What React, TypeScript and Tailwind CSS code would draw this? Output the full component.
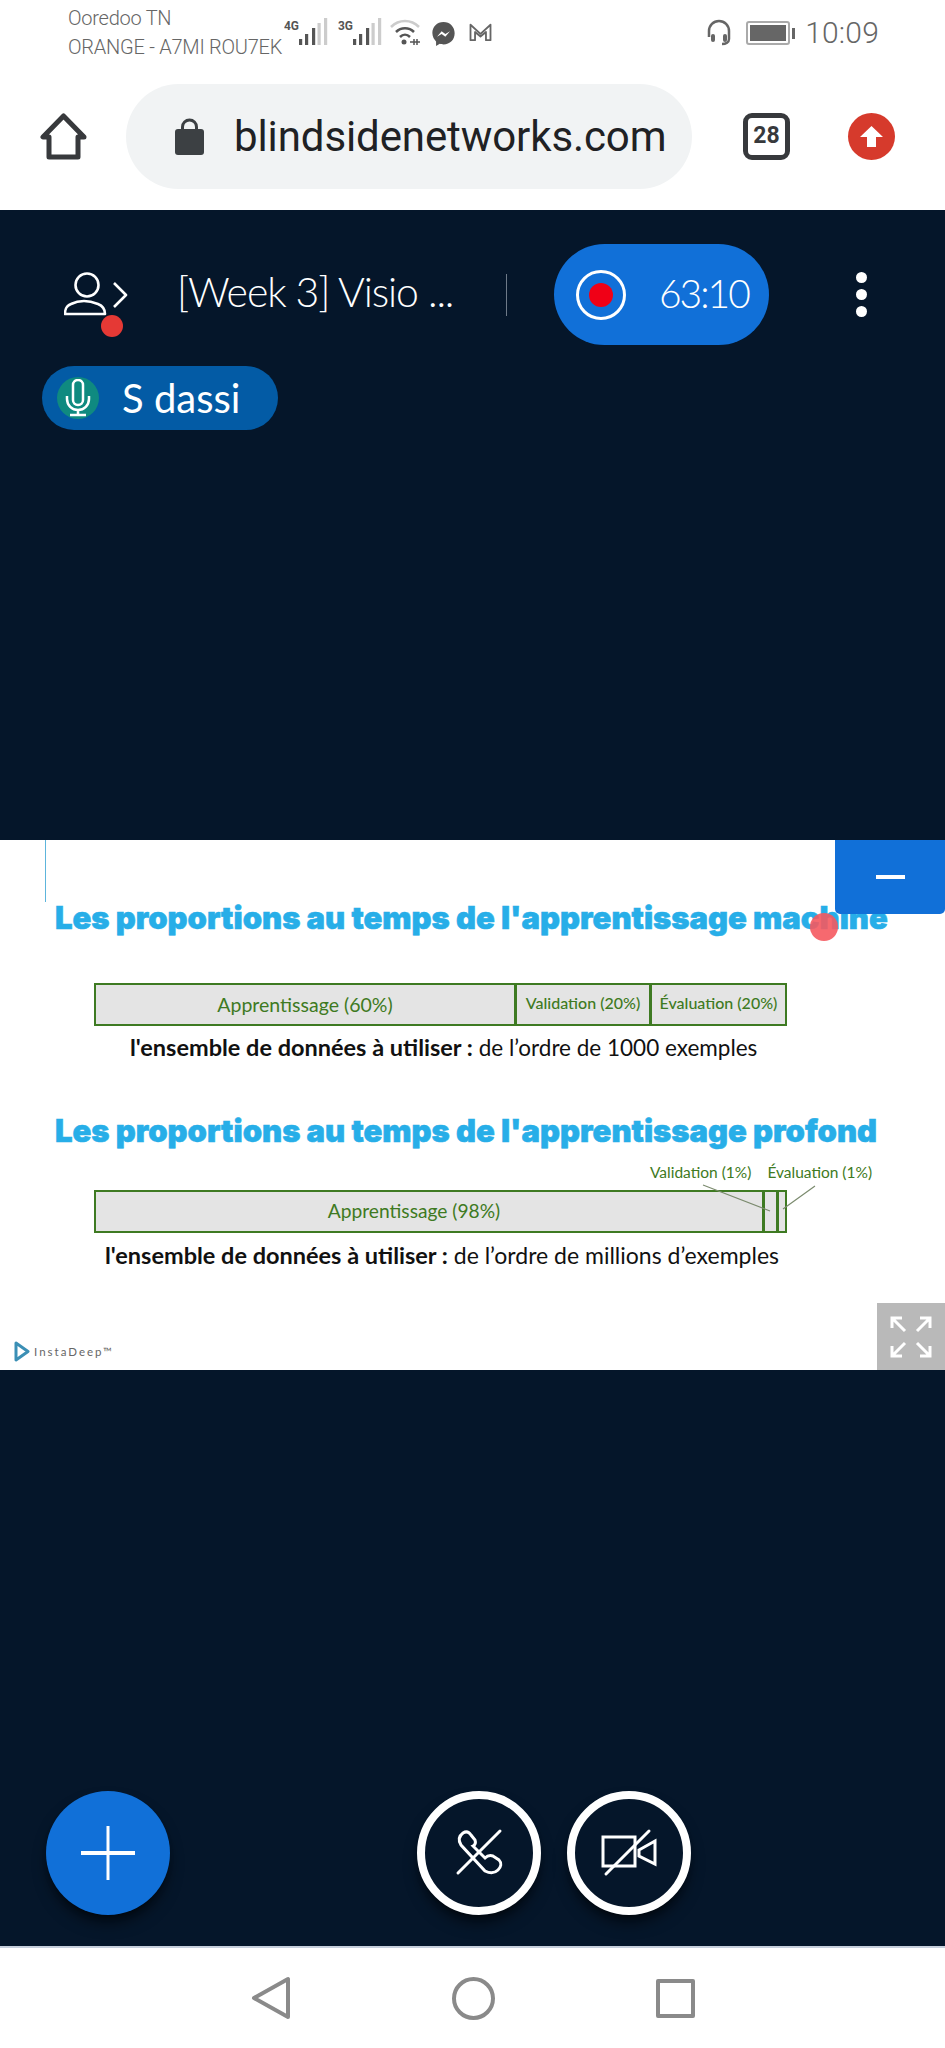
const sans = "font-['Lato','Liberation_Sans',sans-serif]";

function SignalIcon({ label }: { label: string }) {
  return (
    <svg width="44" height="28" viewBox="0 0 44 28">
      <text x="0" y="12" fontSize="13" fontWeight="700" fill="#555" fontFamily="Roboto, sans-serif" textLength="15" lengthAdjust="spacingAndGlyphs">{label}</text>
      <rect x="15" y="21" width="3.2" height="6" fill="#555" />
      <rect x="21" y="16" width="3.2" height="11" fill="#555" />
      <rect x="28" y="10" width="3.2" height="17" fill="#555" />
      <rect x="33.5" y="5" width="3.2" height="22" fill="#ccc" />
      <rect x="40" y="0" width="3.2" height="27" fill="#ccc" />
    </svg>
  );
}

function StatusBar() {
  return (
    <div className="h-[70px] flex items-start pl-[68px] pr-[66px] font-['Roboto',sans-serif] font-light text-[#666]">
      <div className="w-[216px] pt-[4px] text-[20px] leading-[29px] tracking-[-0.25px] whitespace-nowrap">
        <div>Ooredoo TN</div>
        <div>ORANGE - A7MI ROU7EK</div>
      </div>
      <div className="mt-[18px] flex items-start">
        <SignalIcon label="4G" />
        <div className="ml-[10px]"><SignalIcon label="3G" /></div>
        <svg width="32" height="26" viewBox="0 0 32 26" fill="none" className="ml-[7px] mt-[1px]">
          <path d="M2 8C10 0 22 0 30 8" stroke="#ccc" strokeWidth="2.5" />
          <path d="M7 13c5-5 13-5 18 0" stroke="#555" strokeWidth="2.5" />
          <path d="M11 18c3-3 7-3 10 0" stroke="#555" strokeWidth="2.5" />
          <circle cx="15" cy="23" r="2.5" fill="#555" />
          <path d="M21 23h10M25 20v6M28 20v6" stroke="#555" strokeWidth="1.5" />
        </svg>
        <svg width="25" height="26" viewBox="0 0 26 28" className="ml-[10px] mt-[3px]">
          <path d="M13 1C6 1 1 6 1 13c0 4 2 7 4 9v5l4-2.400c1 .4 3 .6 4 .6 7 0 12-5 12-12S20 1 13 1z" fill="#555" />
          <path d="M6 17l5-6 4 3 5-3-5 6-4-3z" fill="#fff" />
        </svg>
        <svg width="25" height="20" viewBox="0 0 26 22" fill="none" className="ml-[12px] mt-[4px]">
          <path d="M2 20V3l11 10L24 3v17h-5V11l-6 5-6-5v9z" stroke="#666" strokeWidth="2" strokeLinejoin="round" />
        </svg>
      </div>
      <div className="ml-auto mt-[18px] flex items-center">
        <svg width="28" height="28" viewBox="0 0 28 28" fill="none" className="mr-[13px]">
          <path d="M4 18v-6a10 10 0 0 1 20 0v8c0 3-3 5-7 5" stroke="#666" strokeWidth="2.5" />
          <rect x="6" y="15" width="4" height="8" rx="2" fill="#666" />
          <rect x="18" y="15" width="4" height="8" rx="2" fill="#666" />
        </svg>
        <div className="w-[44px] h-[24px] border-2 border-[#aaa] rounded-[3px] p-[2px]">
          <div className="w-full h-full bg-[#666]" />
        </div>
        <div className="w-[3px] h-[11px] bg-[#666] ml-[2px] mr-[10px]" />
        <span className="text-[30px] leading-none font-light tracking-[0.2px]">10:09</span>
      </div>
    </div>
  );
}

function BrowserBar() {
  return (
    <div className="h-[140px] flex items-start pt-[14px] pl-[40px] pr-[50px]">
      <svg width="47" height="47" viewBox="0 0 47 47" fill="none" className="mt-[29px]">
        <path d="M23.5 3L3 24h6v20h29V24h6z" stroke="#37393c" strokeWidth="5" strokeLinejoin="round" />
      </svg>
      <div className="ml-[39px] w-[566px] h-[105px] rounded-full bg-[#f1f3f4] flex items-center pl-[49px]">
        <svg width="29" height="37" viewBox="0 0 29 37" fill="none">
          <path d="M7.500 13V9a7 7 0 0 1 14 0v4" stroke="#3c4043" strokeWidth="3" />
          <rect x="0" y="11" width="29" height="26" rx="3" fill="#3c4043" />
        </svg>
        <span className="ml-[30px] font-['Roboto',sans-serif] text-[42px] text-[#202124] tracking-[-0.1px]">blindsidenetworks.com</span>
      </div>
      <div className="ml-[51px] mt-[29px] w-[47px] h-[47px] rounded-[9px] border-[5px] border-[#37393c] flex items-center justify-center font-['Roboto',sans-serif] font-bold text-[23px] text-[#37393c]">
        28
      </div>
      <div className="ml-auto mt-[29px] w-[47px] h-[47px] rounded-full bg-[#d63a2c] flex items-center justify-center">
        <svg width="25" height="25" viewBox="0 0 25 25"><path d="M12.5 2L24 13h-7v10H8V13H1z" fill="#fff" /></svg>
      </div>
    </div>
  );
}

function MeetingHeader() {
  return (
    <div className="h-[630px] bg-[#05162a] text-white">
      <div className="flex items-center h-[101px] mt-[34px] pl-[64px]">
        <div className="relative w-[64px] h-[70px]">
          <svg width="64" height="46" viewBox="0 0 64 46" fill="none" stroke="#fff" strokeWidth="2.600" className="mt-[12px]">
            <circle cx="23" cy="13" r="11.500" />
            <path d="M1 42c0-5 1-8 6-10 4-2 8-3 13-3s9 1 14 3c5 2 7 5 7 10zM50 11l12 12-12 12" strokeLinejoin="round" />
          </svg>
          <div className="absolute left-[37px] top-[55px] w-[22px] h-[22px] rounded-full bg-[#e53935]" />
        </div>
        <span className={`${sans} ml-[49px] pb-[6px] text-[41px] font-light whitespace-nowrap tracking-[-1.1px] w-[329px]`}>[Week 3] Visio ...</span>
        <div className="w-px h-[42px] bg-[#6e7a88]" />
        <div className="ml-[47px] w-[215px] h-[101px] rounded-full bg-[#1170d8] flex items-center pl-[22px]">
          <div className="w-[50px] h-[50px] rounded-full border-[3px] border-white flex items-center justify-center">
            <div className="w-[24px] h-[24px] rounded-full bg-[#f00016]" />
          </div>
          <span className={`${sans} ml-[33px] pb-[3px] text-[39px] font-light tracking-[-2px]`}>63:10</span>
        </div>
        <div className="ml-[87px] flex flex-col gap-[6px]">
          <div className="w-[11px] h-[11px] rounded-full bg-white" />
          <div className="w-[11px] h-[11px] rounded-full bg-white" />
          <div className="w-[11px] h-[11px] rounded-full bg-white" />
        </div>
      </div>
      <div className="ml-[42px] mt-[21px] w-[236px] h-[64px] rounded-full bg-[#035ba5] flex items-center pl-[15px]">
        <div className="w-[42px] h-[42px] rounded-full bg-[#0f8a80] flex items-center justify-center">
          <svg width="26" height="38" viewBox="0 0 26 38" fill="none" stroke="#fff" strokeWidth="2.500">
            <rect x="8" y="1" width="10" height="25" rx="5" />
            <path d="M2 17v3a11 11 0 0 0 22 0v-3M13 31v5M5 36h16" />
          </svg>
        </div>
        <span className={`${sans} ml-[23px] text-[40px]`}>S dassi</span>
      </div>
    </div>
  );
}

function BarCell({ children, className }: { children?: React.ReactNode; className: string }) {
  return (
    <div className={`flex items-center justify-center border-[#3e7a22] text-[#3e7a22] whitespace-nowrap ${className}`}>{children}</div>
  );
}

function SlideTitle({ children, className }: { children: React.ReactNode; className: string }) {
  return (
    <h2 className={`pl-[55px] font-['Inter',sans-serif] text-[31px] leading-[40px] font-black text-[#27aee8] whitespace-nowrap tracking-[0px] [-webkit-text-stroke:0.6px_#27aee8] ${className}`}>
      {children}
    </h2>
  );
}

function Slide() {
  return (
    <div className={`relative h-[530px] bg-white ${sans}`}>
      <div className="absolute left-[45px] top-0 w-px h-[62px] bg-[#5db5dc]" />

      <SlideTitle className="pt-[58px]">Les proportions au temps de l'apprentissage machine</SlideTitle>
      <div className="ml-[94px] mt-[45px] w-[693px] h-[43px] flex border-2 border-[#3e7a22] bg-[#e4e4e4]">
        <BarCell className="w-[421px] border-r-[3px] text-[19.500px]">Apprentissage (60%)</BarCell>
        <BarCell className="w-[135px] border-r-[3px] text-[16px] font-medium pb-[3px]">Validation (20%)</BarCell>
        <BarCell className="flex-1 text-[16px] font-medium pb-[3px]">Évaluation (20%)</BarCell>
      </div>
      <p className="ml-[130px] mt-[7px] text-[22.500px] leading-[28px] text-[#111] whitespace-nowrap">
        <span className="font-bold text-[23.500px]">l'ensemble de données à utiliser :</span> de l’ordre de 1000 exemples
      </p>

      <SlideTitle className="mt-[49px]">Les proportions au temps de l'apprentissage profond</SlideTitle>
      <div className="ml-[650px] mt-[11px] flex gap-[16px] text-[15.500px] leading-[20px] text-[#3e7a22] whitespace-nowrap">
        <span>Validation (1%)</span>
        <span>Évaluation (1%)</span>
      </div>
      <div className="relative ml-[94px] mt-[8px] w-[693px] h-[43px] flex border-2 border-[#3e7a22] bg-[#e4e4e4]">
        <BarCell className="w-[669px] pr-[30px] border-r-[3px] text-[19.200px]">Apprentissage (98%)</BarCell>
        <BarCell className="w-[14px] border-r-[3px]" />
        <svg className="absolute left-[598px] -top-[16px]" width="130" height="50" viewBox="0 0 130 50" fill="none" stroke="#7b8b6e" strokeWidth="1.200">
          <path d="M9 9L76 35M121 10L89 33" />
        </svg>
      </div>
      <p className="ml-[105px] mt-[8px] text-[23px] leading-[28px] text-[#111] whitespace-nowrap">
        <span className="font-bold text-[23.500px]">l'ensemble de données à utiliser :</span> de l’ordre de millions d’exemples
      </p>

      <div className="absolute left-[14px] bottom-[8px] flex items-center gap-[4px]">
        <svg width="16" height="21" viewBox="0 0 16 21" fill="none"><path d="M2 2l12 8.500L2 19z" stroke="#3b8fb5" strokeWidth="3" strokeLinejoin="round" /></svg>
        <span className="text-[11.500px] tracking-[2px] text-[#666]">InstaDeep™</span>
      </div>
      <div className="absolute left-[810px] top-[73px] w-[28px] h-[28px] rounded-full bg-[#f5595f]/90" />
      <div className="absolute right-0 top-0 w-[110px] h-[74px] rounded-bl-[5px] rounded-br-[5px] bg-[#1170d8] flex items-center justify-center">
        <div className="w-[29px] h-[4px] bg-white" />
      </div>
      <div className="absolute right-0 bottom-0 w-[68px] h-[67px] bg-[#b9b9b9] flex items-center justify-center">
        <svg width="42" height="42" viewBox="0 0 42 42" fill="none" stroke="#fff" strokeWidth="3">
          <path d="M2 12V2h10M2 2l13 13M40 12V2H30M40 2L27 15M2 30v10h10M2 40l13-13M40 30v10H30M40 40L27 27" />
        </svg>
      </div>
    </div>
  );
}

function CallControls() {
  return (
    <div className="flex-1 bg-[#05162a] border-b-2 border-[#c6cfdc] flex items-start pt-[421px] pl-[46px]">
      <div className="w-[124px] h-[124px] rounded-full bg-[#1170d8] flex items-center justify-center shadow-lg shadow-black/60">
        <svg width="54" height="54" viewBox="0 0 54 54" fill="none" stroke="#fff">
          <path d="M27 0v54" strokeWidth="3" />
          <path d="M0 27h54" strokeWidth="4" />
        </svg>
      </div>
      <div className="ml-[247px] w-[124px] h-[124px] rounded-full border-[8px] border-white flex items-center justify-center shadow-lg shadow-black/60">
        <svg width="54" height="54" viewBox="0 0 54 54" fill="none" stroke="#fff" strokeWidth="3" strokeLinecap="round">
          <path d="M48 5L6 47" />
          <path d="M9 19C6 14 7 10 11 7c3-2 6-1 8 2l4 5c1 3 0 5-2 6l12 12c2-2 5-3 8-2l6 4c3 3 2 7-1 10-4 4-9 3-13 1z" />
        </svg>
      </div>
      <div className="ml-[26px] w-[124px] h-[124px] rounded-full border-[8px] border-white flex items-center justify-center shadow-lg shadow-black/60">
        <svg width="56" height="54" viewBox="0 0 56 54" fill="none" stroke="#fff" strokeWidth="3" strokeLinecap="round">
          <path d="M2 11H34V40H2Z" />
          <path d="M38 24L54 15V38L38 30Z" />
          <path d="M48 5L5 48" />
        </svg>
      </div>
    </div>
  );
}

function NavBar() {
  return (
    <div className="h-[100px] bg-white flex items-center justify-center gap-[161px] pl-[1px]">
      <svg width="40" height="44" viewBox="0 0 40 44" fill="none" stroke="#8a8a8a" strokeWidth="4" strokeLinejoin="round"><path d="M37 3v38L3 22z" /></svg>
      <div className="w-[43px] h-[43px] rounded-full border-4 border-[#8a8a8a]" />
      <div className="w-[39px] h-[39px] rounded-[2px] border-4 border-[#8a8a8a]" />
    </div>
  );
}

export default function App() {
  return (
    <div className="w-[945px] h-[2048px] flex flex-col bg-white overflow-hidden">
      <StatusBar />
      <BrowserBar />
      <MeetingHeader />
      <Slide />
      <CallControls />
      <NavBar />
    </div>
  );
}
